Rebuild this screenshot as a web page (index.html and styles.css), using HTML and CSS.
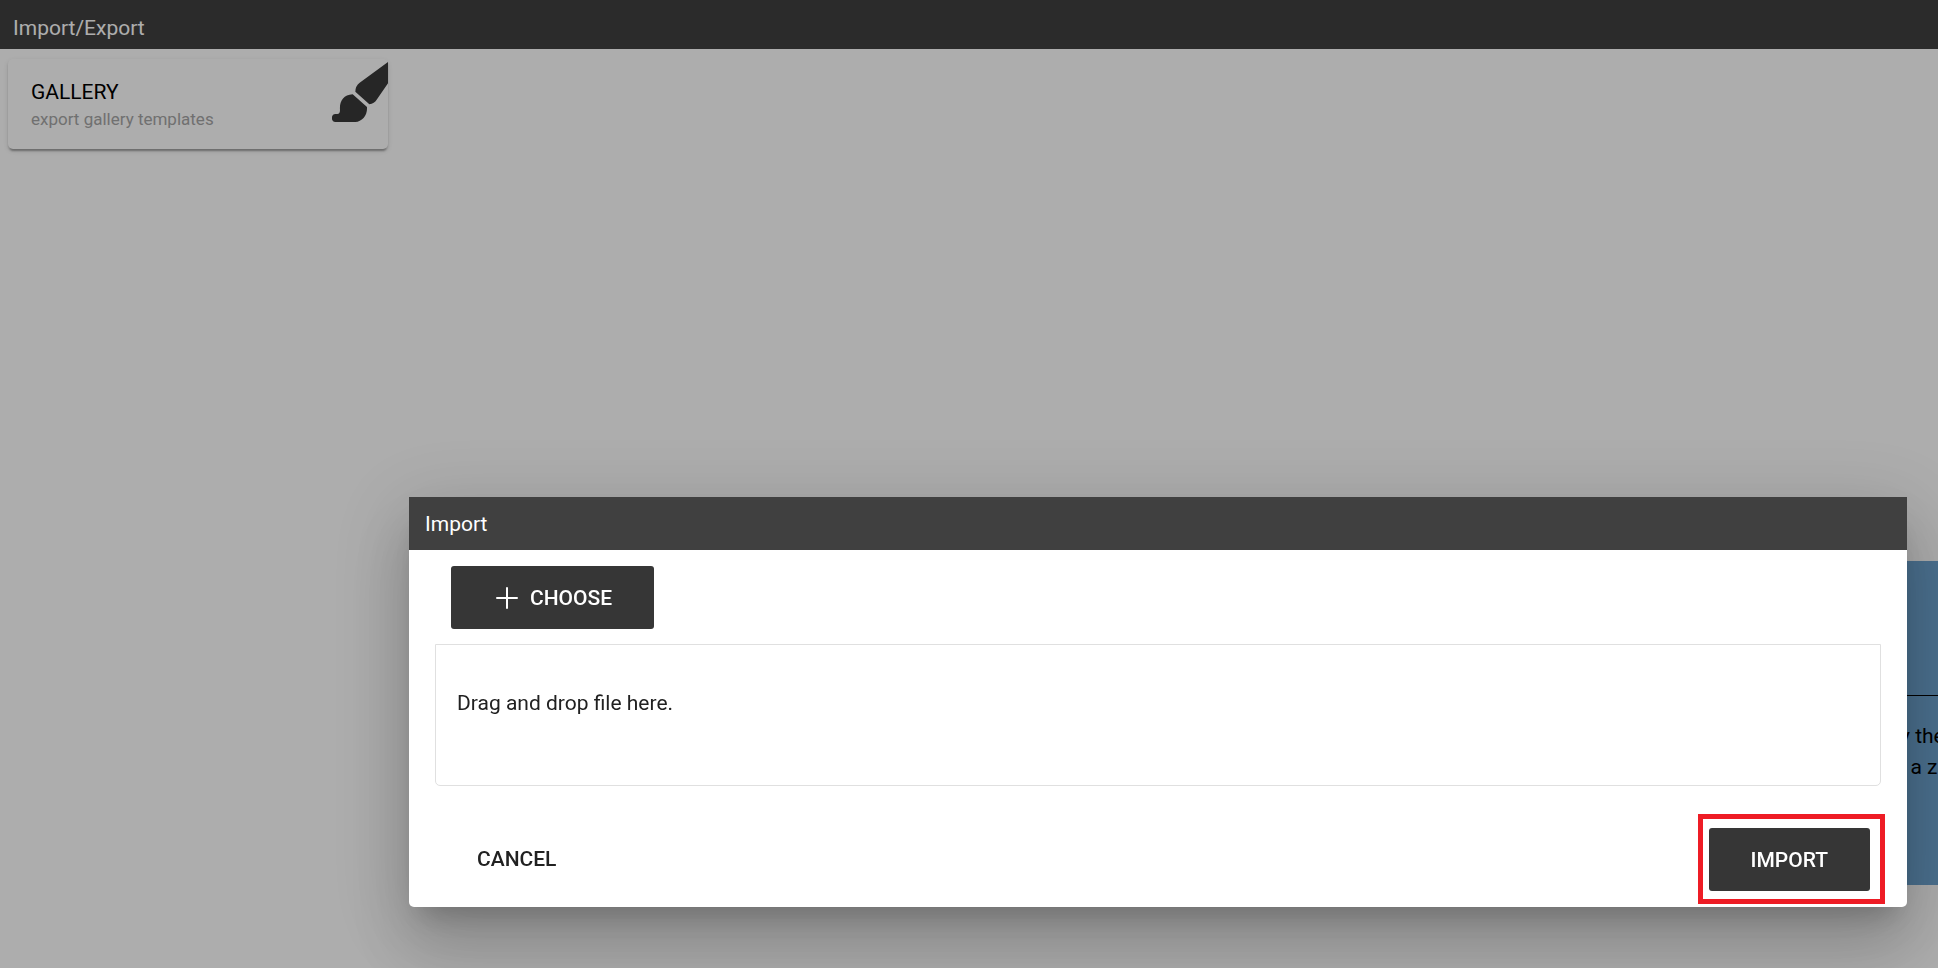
FILE: index.html
```html
<!DOCTYPE html>
<html lang="en">
<head>
    <meta charset="utf-8">
    <title>Import/Export</title>
    <link rel="stylesheet" href="styles.css">
</head>
<body>
    <div class="page">
        <header class="topbar">
            <h1>Import/Export</h1>
        </header>
        <main class="content">
            <div class="card">
                <div class="card-text">
                    <h2>GALLERY</h2>
                    <p>export gallery templates</p>
                </div>
                <svg class="card-icon" viewBox="36 50 168 180" aria-hidden="true">
                    <path d="M204 50L119 112Q106 122 106 139L148 177Q163 174 170 163L204 114Z"/>
                    <path d="M98 147L141 185C143 210 126 230 106 230H46C32 230 32 206 46 206H52Q60 206 60 194C58 168 70 149 98 147Z"/>
                </svg>
            </div>
            <aside class="note">
                <div class="note-head"></div>
                <div class="note-body">
                    <p>y the</p>
                    <p>  a z</p>
                </div>
            </aside>
        </main>
    </div>

    <div class="overlay">
        <form class="dialog" role="dialog" aria-labelledby="dialogTitle">
            <h2 class="dialog-title" id="dialogTitle">Import</h2>
            <div class="dialog-body">
                <div class="choose-row">
                    <button type="button" class="btn btn-dark btn-choose">
                        <svg class="plus" viewBox="0 0 22 22" aria-hidden="true">
                            <path d="M11 1V21M1 11H21"/>
                        </svg>
                        CHOOSE
                    </button>
                </div>
                <div class="drop-area">Drag and drop file here.</div>
            </div>
            <div class="dialog-footer">
                <button type="button" class="btn btn-text">CANCEL</button>
                <div class="highlight">
                    <button type="submit" class="btn btn-dark">IMPORT</button>
                </div>
            </div>
        </form>
    </div>
</body>
</html>
```
FILE: styles.css
```css
* {
    box-sizing: border-box;
}
body {
    margin: 0;
    font-family: Roboto, "Liberation Sans", sans-serif;
    font-size: 21px;
    color: #212121;
    background-color: #fff;
}
h1, h2, p {
    margin: 0;
    font-weight: normal;
}
.page {
    display: flex;
    flex-direction: column;
    min-height: 100vh;
}
.topbar {
    background-color: #404040;
    color: #fff;
    padding: 14px 13px 7px;
}
.topbar h1 {
    font-size: 21px;
    line-height: 28px;
}
.content {
    flex: 1;
    display: flex;
    justify-content: space-between;
    align-items: flex-start;
    padding: 10px 0 83px 8px;
}

/* gallery card */
.card {
    display: flex;
    justify-content: space-between;
    width: 380px;
    height: 90px;
    padding: 3px 0 0 23px;
    border-radius: 5px;
    box-shadow: 0 4px 2px -2px rgba(0,0,0,0.2), 0 2px 2px 0 rgba(0,0,0,0.14), 0 2px 5px 0 rgba(0,0,0,0.12);
    background-color: #fff;
}
.card-text {
    padding-top: 16px;
}
.card h2 {
    color: #000;
    font-size: 21px;
    line-height: 28px;
}
.card p {
    color: #a6a6a6;
    font-size: 17px;
    line-height: 26px;
}
.card-icon {
    width: 56px;
    height: 60px;
    fill: #383838;
}

/* blue help note on the right edge */
.note {
    align-self: flex-end;
    width: 39px;
    height: 324px;
    overflow: hidden;
    background-color: #6ea5d2;
    color: #000;
}
.note-head {
    height: 135px;
    border-bottom: 1px solid #000;
}
.note-body {
    padding: 25px 0 0 1px;
    line-height: 31px;
}
.note-body p {
    white-space: pre;
}

/* import dialog */
.overlay {
    position: fixed;
    inset: 0;
    display: flex;
    align-items: flex-end;
    padding: 0 31px 61px 409px;
    background-color: rgba(0,0,0,0.32);
}
.dialog {
    flex: 1;
    background-color: #fff;
    border-radius: 0 0 5px 5px;
    box-shadow: 0 19px 26px -12px rgba(0,0,0,0.2), 0 42px 66px 5px rgba(0,0,0,0.14), 0 16px 80px 14px rgba(0,0,0,0.12);
}
.dialog-title {
    padding: 1px 16px 0;
    background-color: #404040;
    color: #fff;
    font-size: 21px;
    font-weight: 400;
    line-height: 52px;
}
.dialog-body {
    padding: 16px 26px 0;
}
.choose-row {
    padding: 0 16px 15px;
}
.drop-area {
    height: 142px;
    padding: 44px 21px;
    border: 1px solid #e0e0e0;
    border-radius: 0 0 5px 5px;
    line-height: 28px;
}
.dialog-footer {
    display: flex;
    justify-content: space-between;
    align-items: center;
    padding: 28px 22px 3px 26px;
}
.highlight {
    padding: 9px 10px 8px 6px;
    border: 5px solid #ee1c25;
}
.btn {
    display: flex;
    align-items: center;
    justify-content: center;
    height: 63px;
    padding: 0 42px;
    border: none;
    border-radius: 3px;
    font-family: inherit;
    font-size: 21px;
    font-weight: 500;
    cursor: pointer;
}
.btn-dark {
    background-color: #363636;
    color: #fff;
}
.btn-choose {
    gap: 12px;
    padding: 0 42px 0 45px;
}
.btn-text {
    background-color: transparent;
    color: #212121;
}
.plus {
    width: 22px;
    height: 22px;
    fill: none;
    stroke: #fff;
    stroke-width: 2;
    stroke-linecap: round;
}
```
